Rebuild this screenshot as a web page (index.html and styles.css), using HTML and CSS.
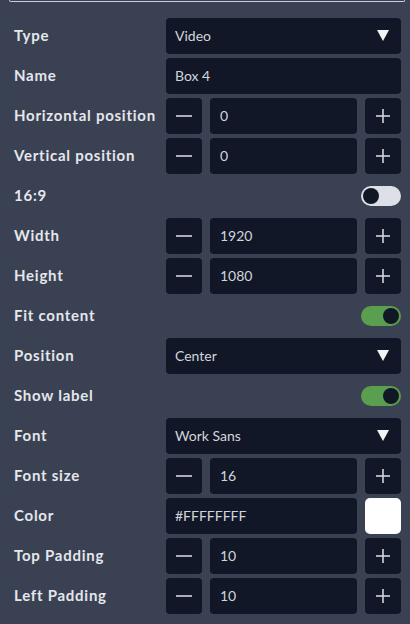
FILE: index.html
```html
<!DOCTYPE html>
<html>
<head>
<meta charset="utf-8">
<link rel="stylesheet" href="styles.css">
</head>
<body>
<div class="panel">
  <div class="topbox"></div>
  <div class="rows">
    <div class="label">Type</div>
    <div class="select"><span>Video</span><svg class="arrow" width="12" height="11" viewBox="0 0 12 11"><polygon points="0,0 12,0 6,11" fill="#f3f4f6"/></svg></div>

    <div class="label">Name</div>
    <div class="field">Box 4</div>

    <div class="label">Horizontal position</div>
    <div class="stepper">
      <div class="btn"><svg width="16" height="16" viewBox="0 0 16 16"><line x1="0" y1="8" x2="16" y2="8" stroke="#d1d5db" stroke-width="1.6"/></svg></div>
      <div class="field">0</div>
      <div class="btn"><svg width="16" height="16" viewBox="0 0 16 16"><line x1="1" y1="8" x2="15" y2="8" stroke="#d1d5db" stroke-width="1.6"/><line x1="8" y1="1" x2="8" y2="15" stroke="#d1d5db" stroke-width="1.6"/></svg></div>
    </div>

    <div class="label">Vertical position</div>
    <div class="stepper">
      <div class="btn"><svg width="16" height="16" viewBox="0 0 16 16"><line x1="0" y1="8" x2="16" y2="8" stroke="#d1d5db" stroke-width="1.6"/></svg></div>
      <div class="field">0</div>
      <div class="btn"><svg width="16" height="16" viewBox="0 0 16 16"><line x1="1" y1="8" x2="15" y2="8" stroke="#d1d5db" stroke-width="1.6"/><line x1="8" y1="1" x2="8" y2="15" stroke="#d1d5db" stroke-width="1.6"/></svg></div>
    </div>

    <div class="label">16:9</div>
    <div class="toggle-cell"><div class="toggle off"><div class="knob"></div></div></div>

    <div class="label">Width</div>
    <div class="stepper">
      <div class="btn"><svg width="16" height="16" viewBox="0 0 16 16"><line x1="0" y1="8" x2="16" y2="8" stroke="#d1d5db" stroke-width="1.6"/></svg></div>
      <div class="field">1920</div>
      <div class="btn"><svg width="16" height="16" viewBox="0 0 16 16"><line x1="1" y1="8" x2="15" y2="8" stroke="#d1d5db" stroke-width="1.6"/><line x1="8" y1="1" x2="8" y2="15" stroke="#d1d5db" stroke-width="1.6"/></svg></div>
    </div>

    <div class="label">Height</div>
    <div class="stepper">
      <div class="btn"><svg width="16" height="16" viewBox="0 0 16 16"><line x1="0" y1="8" x2="16" y2="8" stroke="#d1d5db" stroke-width="1.6"/></svg></div>
      <div class="field">1080</div>
      <div class="btn"><svg width="16" height="16" viewBox="0 0 16 16"><line x1="1" y1="8" x2="15" y2="8" stroke="#d1d5db" stroke-width="1.6"/><line x1="8" y1="1" x2="8" y2="15" stroke="#d1d5db" stroke-width="1.6"/></svg></div>
    </div>

    <div class="label">Fit content</div>
    <div class="toggle-cell"><div class="toggle on"><div class="knob"></div></div></div>

    <div class="label">Position</div>
    <div class="select"><span>Center</span><svg class="arrow" width="12" height="11" viewBox="0 0 12 11"><polygon points="0,0 12,0 6,11" fill="#f3f4f6"/></svg></div>

    <div class="label">Show label</div>
    <div class="toggle-cell"><div class="toggle on"><div class="knob"></div></div></div>

    <div class="label">Font</div>
    <div class="select"><span>Work Sans</span><svg class="arrow" width="12" height="11" viewBox="0 0 12 11"><polygon points="0,0 12,0 6,11" fill="#f3f4f6"/></svg></div>

    <div class="label">Font size</div>
    <div class="stepper">
      <div class="btn"><svg width="16" height="16" viewBox="0 0 16 16"><line x1="0" y1="8" x2="16" y2="8" stroke="#d1d5db" stroke-width="1.6"/></svg></div>
      <div class="field">16</div>
      <div class="btn"><svg width="16" height="16" viewBox="0 0 16 16"><line x1="1" y1="8" x2="15" y2="8" stroke="#d1d5db" stroke-width="1.6"/><line x1="8" y1="1" x2="8" y2="15" stroke="#d1d5db" stroke-width="1.6"/></svg></div>
    </div>

    <div class="label">Color</div>
    <div class="colorrow">
      <div class="field">#FFFFFFFF</div>
      <div class="swatch"></div>
    </div>

    <div class="label">Top Padding</div>
    <div class="stepper">
      <div class="btn"><svg width="16" height="16" viewBox="0 0 16 16"><line x1="0" y1="8" x2="16" y2="8" stroke="#d1d5db" stroke-width="1.6"/></svg></div>
      <div class="field">10</div>
      <div class="btn"><svg width="16" height="16" viewBox="0 0 16 16"><line x1="1" y1="8" x2="15" y2="8" stroke="#d1d5db" stroke-width="1.6"/><line x1="8" y1="1" x2="8" y2="15" stroke="#d1d5db" stroke-width="1.6"/></svg></div>
    </div>

    <div class="label">Left Padding</div>
    <div class="stepper">
      <div class="btn"><svg width="16" height="16" viewBox="0 0 16 16"><line x1="0" y1="8" x2="16" y2="8" stroke="#d1d5db" stroke-width="1.6"/></svg></div>
      <div class="field">10</div>
      <div class="btn"><svg width="16" height="16" viewBox="0 0 16 16"><line x1="1" y1="8" x2="15" y2="8" stroke="#d1d5db" stroke-width="1.6"/><line x1="8" y1="1" x2="8" y2="15" stroke="#d1d5db" stroke-width="1.6"/></svg></div>
    </div>
  </div>
</div>
</body>
</html>
```

FILE: styles.css
```css
html, body {
  margin: 0;
  padding: 0;
  background: #394153;
  height: 100%;
}
body {
  font-family: Lato, "Noto Sans", sans-serif;
  overflow: hidden;
}
.panel {
  width: 410px;
  height: 624px;
  background: #394153;
}
.topbox {
  margin-left: 9px;
  width: 394px;
  height: 1px;
  border: 1px solid #c9ced8;
  border-top: none;
  border-radius: 0 0 5px 5px;
}
.rows {
  display: grid;
  grid-template-columns: 152px 235px;
  grid-auto-rows: 36px;
  row-gap: 4px;
  padding: 16px 9px 0 14px;
}
.label {
  display: flex;
  align-items: center;
  color: #e5e7eb;
  font-weight: 700;
  font-size: 15px;
  letter-spacing: 0.75px;
  white-space: nowrap;
  padding-bottom: 2px;
  box-sizing: border-box;
}
.select, .field {
  background: #111727;
  border-radius: 4px;
  display: flex;
  align-items: center;
  color: #d1d5db;
  font-size: 14px;
  padding-left: 9px;
  padding-bottom: 1px;
  box-sizing: border-box;
}
.select {
  justify-content: space-between;
  padding-right: 12px;
}
.stepper {
  display: grid;
  grid-template-columns: 36px 1fr 36px;
  column-gap: 8px;
}
.stepper .field {
  padding-left: 10px;
}
.btn {
  background: #111727;
  border-radius: 4px;
  display: flex;
  align-items: center;
  justify-content: center;
}
.colorrow {
  display: grid;
  grid-template-columns: 1fr 36px;
  column-gap: 8px;
}
.swatch {
  background: #ffffff;
  border-radius: 5px;
}
.toggle-cell {
  display: flex;
  align-items: center;
  justify-content: flex-end;
}
.toggle {
  width: 40px;
  height: 20px;
  border-radius: 10px;
  display: flex;
  align-items: center;
  box-sizing: border-box;
  padding: 0 2px;
}
.toggle.off {
  background: #dde0e6;
  justify-content: flex-start;
}
.toggle.on {
  background: #5a9e4f;
  justify-content: flex-end;
}
.knob {
  width: 16px;
  height: 16px;
  border-radius: 50%;
  background: #111727;
}
```
